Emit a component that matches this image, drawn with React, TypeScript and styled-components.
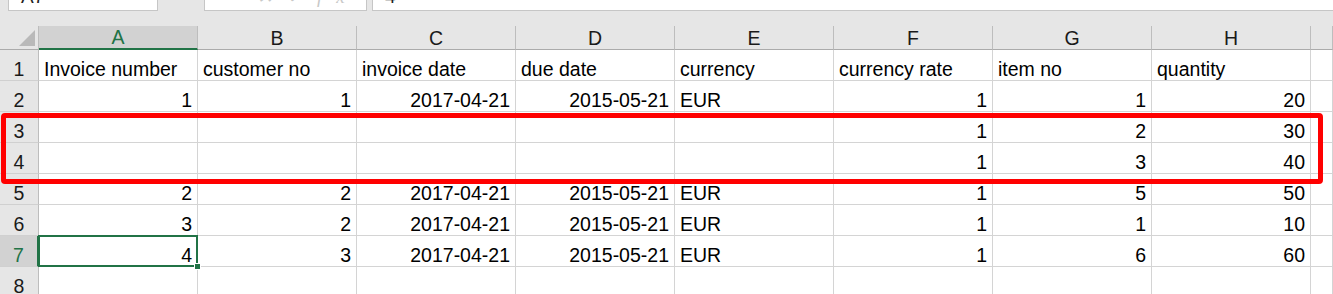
import React from 'react';
import styled, { createGlobalStyle } from 'styled-components';

const GlobalStyle = createGlobalStyle`
  html, body {
    margin: 0;
    padding: 0;
    background: #e6e6e6;
    overflow: hidden;
  }
  body {
    font-family: "Liberation Sans", Arial, sans-serif;
  }
`;

const COLS = ['A', 'B', 'C', 'D', 'E', 'F', 'G', 'H'];

type Align = 'left' | 'right';
type CellData = { v: string; a: Align } | null;

const L = (v: string): CellData => ({ v, a: 'left' });
const R = (v: string): CellData => ({ v, a: 'right' });

const ROWS: CellData[][] = [
  [L('Invoice number'), L('customer no'), L('invoice date'), L('due date'), L('currency'), L('currency rate'), L('item no'), L('quantity')],
  [R('1'), R('1'), R('2017-04-21'), R('2015-05-21'), L('EUR'), R('1'), R('1'), R('20')],
  [null, null, null, null, null, R('1'), R('2'), R('30')],
  [null, null, null, null, null, R('1'), R('3'), R('40')],
  [R('2'), R('2'), R('2017-04-21'), R('2015-05-21'), L('EUR'), R('1'), R('5'), R('50')],
  [R('3'), R('2'), R('2017-04-21'), R('2015-05-21'), L('EUR'), R('1'), R('1'), R('10')],
  [R('4'), R('3'), R('2017-04-21'), R('2015-05-21'), L('EUR'), R('1'), R('6'), R('60')],
  [null, null, null, null, null, null, null, null],
];

const ACTIVE_ROW = 7;
const ACTIVE_COL = 'A';

const Page = styled.div`
  position: relative;
  width: 1333px;
  height: 294px;
  overflow: hidden;
  background: #e6e6e6;
`;

const FormulaBar = styled.div`
  display: flex;
  height: 26px;
  padding-left: 8px;
  box-sizing: border-box;
  overflow: hidden;
`;

const BarBox = styled.div<{ $w: number | 'fill'; $gap?: number }>`
  flex: ${p => (p.$w === 'fill' ? '1' : `0 0 ${p.$w}px`)};
  margin-left: ${p => p.$gap ?? 0}px;
  height: 32px;
  margin-top: -21px;
  background: #fff;
  border: 1px solid #c6c6c6;
  border-right: ${p => (p.$w === 'fill' ? 'none' : '1px solid #c6c6c6')};
  box-sizing: border-box;
  font-size: 19px;
  line-height: 19px;
  color: #222;
  padding: 7px 0 0 12px;
  overflow: hidden;
`;

const FaintText = styled.span`
  color: #c8c8c8;
  font-family: "Liberation Serif", serif;
  font-style: italic;
  letter-spacing: 14px;
  padding-left: 40px;
`;

const Grid = styled.div`
  display: grid;
  grid-template-columns: 39px repeat(8, 159px) 1fr;
  grid-template-rows: 24px repeat(8, 31px);
  background: #fff;
`;

const Corner = styled.div`
  position: relative;
  background: #e6e6e6;
  border-right: 1px solid #bdbdbd;
  border-bottom: 1px solid #ababab;
  box-sizing: border-box;
`;

const CornerTriangle = styled.div`
  position: absolute;
  right: 3px;
  bottom: 3px;
  width: 0;
  height: 0;
  border-left: 16px solid transparent;
  border-bottom: 16px solid #b9b9b9;
`;

const ColHeader = styled.div<{ $active?: boolean }>`
  display: flex;
  align-items: flex-end;
  justify-content: center;
  padding-bottom: 1px;
  background: ${p => (p.$active ? '#d2d2d2' : '#e6e6e6')};
  color: ${p => (p.$active ? '#217346' : '#1a1a1a')};
  border-right: 1px solid #bdbdbd;
  border-bottom: ${p => (p.$active ? '2px solid #217346' : '1px solid #ababab')};
  box-sizing: border-box;
  font-size: 19.5px;
  line-height: 20px;
`;

const RowHeader = styled.div<{ $active?: boolean }>`
  display: flex;
  align-items: flex-end;
  justify-content: center;
  padding-bottom: 1px;
  background: ${p => (p.$active ? '#d2d2d2' : '#e6e6e6')};
  color: ${p => (p.$active ? '#217346' : '#1a1a1a')};
  border-right: ${p => (p.$active ? '2px solid #217346' : '1px solid #bdbdbd')};
  border-bottom: 1px solid #d0d0d0;
  box-sizing: border-box;
  font-size: 19.5px;
  line-height: 20px;
`;

const Cell = styled.div<{ $align: Align; $selected?: boolean }>`
  position: relative;
  z-index: ${p => (p.$selected ? 2 : 'auto')};
  display: flex;
  align-items: flex-end;
  justify-content: ${p => (p.$align === 'right' ? 'flex-end' : 'flex-start')};
  padding: 0 5px 1px 5px;
  border-right: 1px solid #d4d4d4;
  border-bottom: 1px solid #d4d4d4;
  box-sizing: border-box;
  font-size: 19.5px;
  line-height: 20px;
  color: #000;
  white-space: nowrap;
`;

const Selection = styled.div`
  position: absolute;
  top: -1px;
  left: -1px;
  right: -1px;
  bottom: -1px;
  border: 2px solid #217346;
  pointer-events: none;
`;

const FillHandle = styled.div`
  position: absolute;
  right: -5px;
  bottom: -5px;
  width: 5px;
  height: 5px;
  background: #217346;
  border: 1px solid #fff;
`;

const Highlight = styled.div`
  position: absolute;
  z-index: 3;
  left: 1px;
  top: 113px;
  width: 1322px;
  height: 71px;
  border: 5px solid #f00;
  border-radius: 4px;
  box-sizing: border-box;
  pointer-events: none;
`;

export default function App() {
  return (
    <Page>
      <GlobalStyle />
      <FormulaBar>
        <BarBox $w={150}>A7</BarBox>
        <BarBox $w={163} $gap={46}>
          <FaintText>✕✓fx</FaintText>
        </BarBox>
        <BarBox $w="fill" $gap={5}>4</BarBox>
      </FormulaBar>
      <Grid>
        <Corner>
          <CornerTriangle />
        </Corner>
        {COLS.map(c => (
          <ColHeader key={c} $active={c === ACTIVE_COL}>{c}</ColHeader>
        ))}
        <ColHeader />
        {ROWS.map((row, ri) => {
          const rowNo = ri + 1;
          return (
            <React.Fragment key={rowNo}>
              <RowHeader $active={rowNo === ACTIVE_ROW}>{rowNo}</RowHeader>
              {row.map((cell, ci) => {
                const selected = rowNo === ACTIVE_ROW && COLS[ci] === ACTIVE_COL;
                return (
                  <Cell key={ci} $align={cell?.a ?? 'left'} $selected={selected}>
                    {cell?.v}
                    {selected && (
                      <Selection>
                        <FillHandle />
                      </Selection>
                    )}
                  </Cell>
                );
              })}
              <Cell $align="left" />
            </React.Fragment>
          );
        })}
      </Grid>
      <Highlight />
    </Page>
  );
}
